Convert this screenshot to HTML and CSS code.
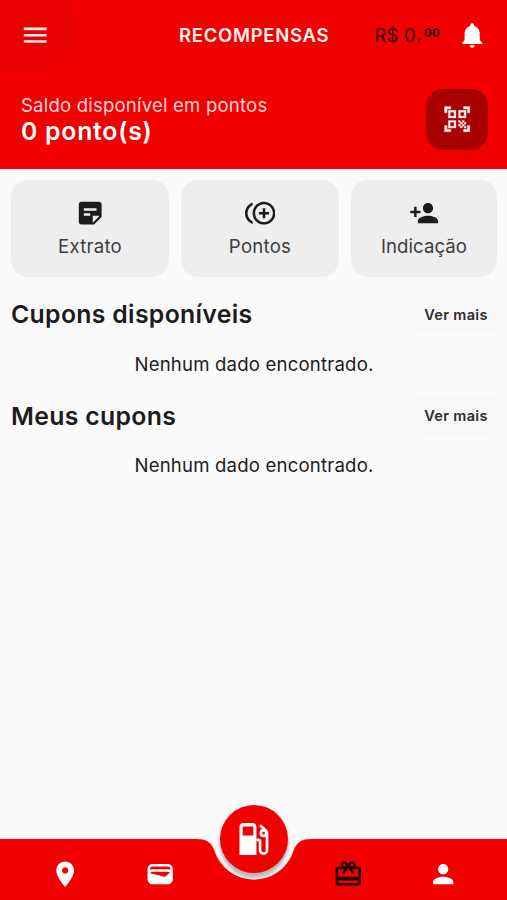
FILE: index.html
```html
<!DOCTYPE html>
<html lang="pt-BR">
<head>
<meta charset="utf-8">
<meta name="viewport" content="width=device-width, initial-scale=1">
<title>Recompensas</title>
<link rel="stylesheet" href="styles.css">
</head>
<body>
<div class="app">
  <header class="header">
    <div class="topbar">
      <button class="menu" aria-label="Menu">
        <svg class="icon" viewBox="0 0 24 24"><path d="M3 18h18v-2H3v2zm0-5h18v-2H3v2zm0-7v2h18V6H3z"/></svg>
      </button>
      <h1 class="title">RECOMPENSAS</h1>
      <div class="wallet"><span class="amount">R$ 0</span><span class="comma">,</span><span class="cents">00</span></div>
      <svg class="icon bell" viewBox="0 0 24 24"><path d="M12 22c1.1 0 2-.9 2-2h-4c0 1.1.89 2 2 2zm6-6v-5c0-3.07-1.64-5.64-4.5-6.32V4c0-.83-.67-1.5-1.5-1.5s-1.5.67-1.5 1.5v.68C7.63 5.36 6 7.92 6 11v5l-2 2v1h16v-1l-2-2z"/></svg>
    </div>
    <div class="balance">
      <div>
        <p class="balance-label">Saldo disponível em pontos</p>
        <p class="balance-value">0 ponto(s)</p>
      </div>
      <button class="scan" aria-label="QR Code">
        <svg class="icon" viewBox="0 0 24 24"><path d="M9.5 6.5v3h-3v-3h3M11 5H5v6h6V5zM9.5 14.5v3h-3v-3h3M11 13H5v6h6v-6zM17.5 6.5v3h-3v-3h3M19 5h-6v6h6V5zM13 13h1.5v1.5H13V13zM14.5 14.5H16V16h-1.5V14.5zM16 13h1.5v1.5H16V13zM13 16h1.5v1.5H13V16zM14.5 17.5H16V19h-1.5V17.5zM16 16h1.5v1.5H16V16zM17.5 14.5H19V16h-1.5V14.5zM17.5 17.5H19V19h-1.5V17.5zM22 7h-2V4h-3V2h5V7zM22 22v-5h-2v3h-3v2H22zM2 22h5v-2H4v-3H2V22zM2 2v5h2V4h3V2H2z"/></svg>
      </button>
    </div>
  </header>
  <main class="content">
    <div class="actions">
      <button class="action">
        <svg class="icon" viewBox="0 0 24 24"><path d="M19 3H4.99C3.89 3 3 3.9 3 5l.01 14c0 1.1.89 2 1.99 2h10l6-6V5c0-1.1-.9-2-2-2zM7 8h10v2H7V8zm5 6H7v-2h5v2zm2 5.5V14h5.5L14 19.5z"/></svg>
        <span>Extrato</span>
      </button>
      <button class="action">
        <svg class="icon" viewBox="0 0 24 24"><path d="M16 8h-2v3h-3v2h3v3h2v-3h3v-2h-3V8zM2 12c0-2.79 1.64-5.2 4.01-6.32V3.52C2.52 4.76 0 8.09 0 12s2.52 7.24 6.01 8.48v-2.16C3.64 17.2 2 14.79 2 12zm13-9c-4.96 0-9 4.04-9 9s4.04 9 9 9 9-4.04 9-9-4.04-9-9-9zm0 16c-3.86 0-7-3.14-7-7s3.14-7 7-7 7 3.14 7 7-3.14 7-7 7z"/></svg>
        <span>Pontos</span>
      </button>
      <button class="action invite">
        <svg class="icon" viewBox="0 0 24 24"><path d="M15 12c2.21 0 4-1.79 4-4s-1.79-4-4-4-4 1.79-4 4 1.79 4 4 4zm-9-2V7H4v3H1v2h3v3h2v-3h3v-2H6zm9 4c-2.67 0-8 1.34-8 4v2h16v-2c0-2.66-5.33-4-8-4z"/></svg>
        <span>Indicação</span>
      </button>
    </div>
    <section class="section">
      <div class="section-head"><h2>Cupons disponíveis</h2><button class="more">Ver mais</button></div>
      <p class="empty">Nenhum dado encontrado.</p>
    </section>
    <section class="section">
      <div class="section-head"><h2>Meus cupons</h2><button class="more">Ver mais</button></div>
      <p class="empty">Nenhum dado encontrado.</p>
    </section>
  </main>
  <nav class="nav">
    <svg class="nav-shape" viewBox="0 0 507 61"><path d="M0 0H196C206 0 211 3 214 10.500A41.600 41.600 0 0 0 294 10.500C297 3 302 0 312 0H507V61H0Z"/></svg>
    <div class="tabs">
      <svg class="icon" viewBox="0 0 24 24"><path d="M12 2C8.130 2 5 5.130 5 9c0 5.250 7 13 7 13s7-7.750 7-13c0-3.870-3.130-7-7-7zm0 9.500c-1.380 0-2.500-1.120-2.500-2.500s1.120-2.500 2.500-2.500 2.500 1.120 2.500 2.500-1.120 2.500-2.500 2.500z"/></svg>
      <svg class="icon" viewBox="0 0 24 24"><path d="M18 4H6C3.790 4 2 5.790 2 8v8c0 2.210 1.790 4 4 4h12c2.210 0 4-1.790 4-4V8c0-2.210-1.790-4-4-4zm-1.860 9.770c-.24.2-.57.28-.88.2L4.150 11.250C4.450 10.520 5.160 10 6 10h12c.67 0 1.260.34 1.630.84l-3.490 2.930zM6 6h12c1.100 0 2 .9 2 2v.55C19.410 8.210 18.730 8 18 8H6c-.73 0-1.410.21-2 .55V8c0-1.100.9-2 2-2z"/></svg>
      <span class="gap"></span>
      <svg class="icon current" viewBox="0 0 24 24"><path d="M20 6h-2.180c.11-.31.18-.65.18-1 0-1.660-1.340-3-3-3-1.050 0-1.960.54-2.500 1.350l-.5.67-.5-.68C10.960 2.540 10.050 2 9 2 7.340 2 6 3.340 6 5c0 .35.07.69.18 1H4c-1.110 0-1.990.89-1.990 2L2 19c0 1.110.89 2 2 2h16c1.110 0 2-.89 2-2V8c0-1.110-.89-2-2-2zm-5-2c.55 0 1 .45 1 1s-.45 1-1 1-1-.45-1-1 .45-1 1-1zM9 4c.55 0 1 .45 1 1s-.45 1-1 1-1-.45-1-1 .45-1 1-1zm11 15H4v-2h16v2zm0-5H4V8h5.080L7 10.830 8.620 12 11 8.760l1-1.360 1 1.360L15.380 12 17 10.830 14.920 8H20v6z"/></svg>
      <svg class="icon" viewBox="0 0 24 24"><path d="M12 12c2.210 0 4-1.790 4-4s-1.790-4-4-4-4 1.790-4 4 1.790 4 4 4zm0 2c-2.670 0-8 1.340-8 4v2h16v-2c0-2.660-5.330-4-8-4z"/></svg>
    </div>
    <button class="fuel" aria-label="Abastecer">
      <svg viewBox="0 0 32 34"><path fill-rule="evenodd" d="M4.500.5h9.500q4 0 4 4v29H.5V4.500q0-4 4-4zM3.800 4.200v9.300h11v-9.300z"/><path class="hose" d="M18 18h1.700q2 0 2 2v8.500a3.600 3.600 0 0 0 7.200 0V11q0-1.800-1.500-3L21.700 2.700"/><circle class="hose" cx="25.400" cy="11" r="2.800"/></svg>
    </button>
  </nav>
</div>
</body>
</html>
```
FILE: styles.css
```css
* { box-sizing: border-box; }
body { margin: 0; background: #fafafa; color: #1c1c1e; font-family: Inter, "Noto Sans", sans-serif; }
h1, h2, p { margin: 0; }
button { border: 0; padding: 0; font: inherit; color: inherit; }
svg { display: block; }
.app { width: 507px; height: 900px; display: flex; flex-direction: column; overflow: hidden; }
.icon { width: 30.4px; height: 30.4px; fill: currentColor; flex: none; }

.header { height: 169px; background: #f20000; color: #fff; flex: none; box-shadow: 0 1px 1px #ffe3de; }
.topbar { height: 71px; display: flex; align-items: center; }
.menu { width: 79px; height: 71px; padding-left: 20px; display: flex; align-items: center; color: #ffe9e9; background: radial-gradient(ellipse at 38% 40%, #e90000 60%, #f20000 85%); }
.title { width: 151px; margin-left: 100px; font-size: 18.5px; line-height: 22px; padding-bottom: 1px; font-weight: 600; letter-spacing: .7px; white-space: nowrap; color: #fff0f0; }
.wallet { width: 68px; margin-left: 44.5px; padding-bottom: 1px; display: flex; color: #300; white-space: nowrap; line-height: 22px; }
.amount { font-size: 18.5px; letter-spacing: .2px; }
.comma { font-size: 13px; width: 8px; font-weight: 700; padding-left: 1px; line-height: 20px; }
.cents { font-size: 11.5px; font-weight: 700; line-height: 19px; letter-spacing: .4px; }
.bell { margin-left: 14.5px; }
.balance { height: 98px; padding: 18px 19px 0 21px; display: flex; justify-content: space-between; }
.balance-label { margin-top: 5px; font-size: 18.6px; line-height: 23px; letter-spacing: .18px; color: #ffd4d4; }
.balance-value { font-size: 24.8px; line-height: 29px; font-weight: 600; letter-spacing: .75px; }
.scan { width: 62px; height: 61px; border-radius: 17px; background: #a90000; color: #ffe9e9; display: grid; place-items: center; }
.scan path { stroke: currentColor; stroke-width: .25; }

.content { flex: 1; padding: 10.5px 10px 0 11px; }
.actions { display: grid; grid-template-columns: 158px 158px 146px; gap: 12px; }
.action { height: 97px; padding-top: 18px; border-radius: 17px; background: #eee; display: flex; flex-direction: column; align-items: center; font-size: 18.6px; line-height: 24px; letter-spacing: .25px; color: #3c3c3e; }
.action .icon { color: #1c1c1e; margin-bottom: 6.6px; }
.invite { letter-spacing: .05px; }
.section { height: 101.5px; }
.actions + .section { margin-top: 19px; }
.section-head { height: 37px; display: flex; align-items: center; justify-content: space-between; }
.section-head h2 { font-size: 24.8px; line-height: 30px; font-weight: 600; letter-spacing: .32px; }
.more { width: 82px; height: 37px; border-radius: 8px; background: #f7f7f7; font-size: 14.5px; font-weight: 600; letter-spacing: .35px; color: #2c2c2e; }
.empty { margin-top: 19.2px; text-align: center; font-size: 18.6px; line-height: 24px; letter-spacing: .18px; }

.nav { position: relative; height: 61px; flex: none; color: #fff; }
.nav-shape { position: absolute; inset: 0; width: 507px; height: 61px; fill: #f20000; filter: drop-shadow(0 -1px 1px #0001); }
.tabs { position: relative; height: 61px; padding: 20px 49px 0 50px; display: flex; justify-content: space-between; }
.tabs .gap { width: 30px; }
.tabs .current { color: #200; }
.fuel { position: absolute; left: 220px; top: -34px; width: 68px; height: 68px; border-radius: 50%; background: #f20000; display: grid; place-items: center; box-shadow: 0 5px 3px #0003, 0 2px 6px #0002; }
.fuel svg { width: 31px; height: 34px; fill: #fff; }
.fuel .hose { fill: none; stroke: #fff; stroke-width: 2.8; }
```
